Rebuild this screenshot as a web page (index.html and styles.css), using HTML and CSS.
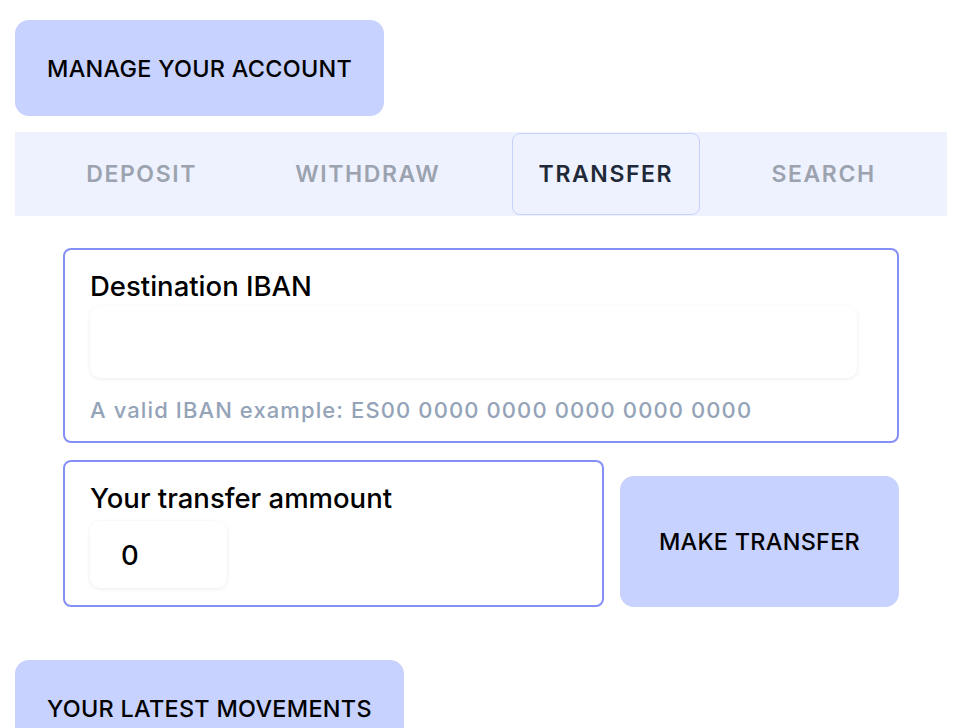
FILE: index.html
```html
<!DOCTYPE html>
<html lang="en">
<head>
<meta charset="utf-8">
<title>Bank</title>
<link rel="stylesheet" href="styles.css">
</head>
<body>
<div class="page">
  <button class="section-btn manage">MANAGE YOUR ACCOUNT</button>
  <nav class="tabs">
    <span class="tab">DEPOSIT</span>
    <span class="tab">WITHDRAW</span>
    <span class="tab active">TRANSFER</span>
    <span class="tab">SEARCH</span>
  </nav>
  <div class="panel">
    <div class="card iban-card">
      <label class="field-label">Destination IBAN</label>
      <div class="input iban-input"></div>
      <p class="hint">A valid IBAN example: ES00 0000 0000 0000 0000 0000</p>
    </div>
    <div class="row">
      <div class="card amount-card">
        <label class="field-label">Your transfer ammount</label>
        <div class="input amount-input">0</div>
      </div>
      <button class="action-btn">MAKE TRANSFER</button>
    </div>
  </div>
  <button class="section-btn movements">YOUR LATEST MOVEMENTS</button>
</div>
</body>
</html>
```
FILE: styles.css
```css
* { box-sizing: border-box; }
html, body { margin: 0; padding: 0; background: #fff; }
body { font-family: Inter, "Noto Sans", sans-serif; color: #000; overflow: hidden; }
.page { padding: 20px 19px 0 15px; display: flex; flex-direction: column; align-items: flex-start; }
button { font-family: inherit; border: none; cursor: pointer; }
.section-btn {
  background: #c7d2fe; border-radius: 14px; color: #000;
  font-size: 23.4px; font-weight: 500; letter-spacing: 0.3px;
  height: 96px; padding: 0 32px;
}
.movements { margin-top: 53px; }
.tabs {
  margin-top: 16px; width: 100%; height: 84px; background: #eef2ff;
  display: flex; justify-content: space-evenly; align-items: stretch;
}
.tab {
  display: flex; align-items: center; padding: 0 26px;
  font-size: 23px; font-weight: 600; letter-spacing: 1.6px; color: #9ca3af;
  border: 1px solid transparent; border-radius: 8px;
}
.tab.active { color: #1f2937; border-color: #c7d2fe; margin: 1px 0; }
.panel { width: 100%; padding: 32px 48px 0; display: flex; flex-direction: column; gap: 17px; }
.card { border: 2px solid #8590f6; border-radius: 8px; background: #fff; }
.field-label { display: block; font-size: 27.5px; font-weight: 500; line-height: 34px; }
.iban-card { height: 195px; padding: 19px 40px 0 25px; }
.input { background: #fff; border-radius: 10px; box-shadow: 0 1px 4px rgba(0,0,0,0.08); }
.iban-input { height: 72px; margin-top: 3px; }
.hint { margin: 18px 0 0; font-size: 22px; font-weight: 500; color: #94a3b8; line-height: 28px; letter-spacing: 1.1px; }
.row { display: flex; gap: 16px; align-items: flex-end; }
.amount-card { flex: 0 0 541px; height: 147px; padding: 19px 25px 0; }
.amount-input { width: 137px; height: 67px; margin-top: 6px; display: flex; align-items: center; padding-left: 31px; font-size: 27.5px; font-weight: 500; }
.action-btn {
  flex: 1; height: 131px; background: #c7d2fe; border-radius: 14px;
  font-size: 23.4px; font-weight: 500; letter-spacing: 0.3px; color: #000;
}
```
